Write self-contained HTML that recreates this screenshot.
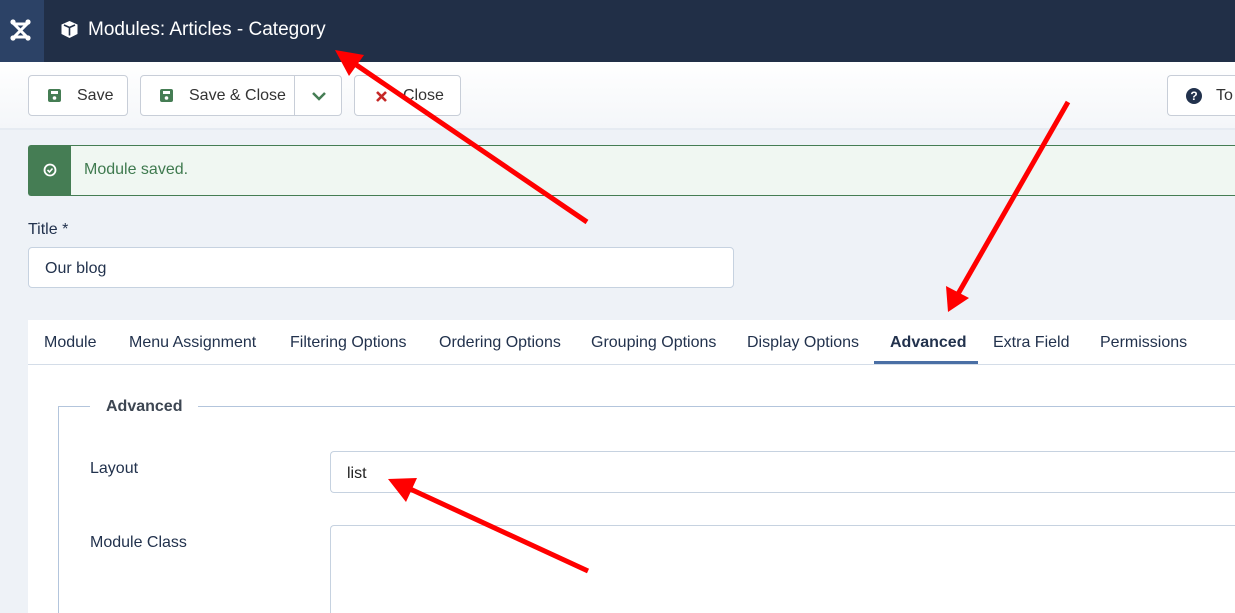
<!DOCTYPE html>
<html style="overflow:hidden;width:1235px;height:613px"><head><style>
*{box-sizing:border-box;margin:0;padding:0}
body{width:1235px;height:613px;overflow:hidden;background:#eef2f7;font-family:"Liberation Sans",sans-serif;color:#22324d;position:relative}
.hdr{position:absolute;left:0;top:0;width:1235px;height:62px;background:#212f47}
.logo{position:absolute;left:0;top:0;width:44px;height:62px;background:#2c4266}
.ttl{position:absolute;left:88px;top:19px;color:#fff;font-size:19px}
.tb{position:absolute;left:0;top:62px;width:1235px;height:68px;background:linear-gradient(#fff,#f4f6f9);border-bottom:2px solid #e6ebf2}
.btn{position:absolute;top:75px;height:41px;border:1px solid #c8ced8;border-radius:4px;background:#fff;font-size:16px;line-height:40px;color:#333;overflow:hidden}
.alert{position:absolute;left:28px;top:145px;width:1207px;height:51px;background:#f0f7f2;border:1px solid #457d54;border-right:none;border-radius:3px 0 0 3px}
.alert .g{position:absolute;left:0;top:0;width:42px;height:49px;background:#457d54}
.lbl{position:absolute;font-size:16px}
.inp{position:absolute;background:#fff;border:1px solid #c6d2e0;border-radius:4px;font-size:16px}
.panel{position:absolute;left:28px;top:320px;width:1207px;height:293px;background:#fff;overflow:hidden}
.tabs{position:absolute;left:0;top:0;width:100%;height:45px;border-bottom:1px solid #d4dde8}
.tab{position:absolute;top:14px;font-size:16px}
</style></head><body>
<div class="hdr"><div class="logo">
<svg width="44" height="62" viewBox="0 0 44 62"><g stroke="#fff" stroke-width="3" fill="none" stroke-linecap="round"><path d="M14 24 L27 37 M27 24 L14 37 M14 24 L27 24 M14 37 L27 37"/></g><g fill="#fff"><circle cx="13" cy="22" r="2.6"/><circle cx="28" cy="22" r="2.6"/><circle cx="13" cy="38" r="2.6"/><circle cx="28" cy="38" r="2.6"/></g></svg></div>
<svg style="position:absolute;left:60px;top:20px" width="19" height="19" viewBox="0 0 19 19"><path d="M9.5 1 L17.5 4.5 V14 L9.5 18 L1.5 14 V4.5Z" fill="#fff"/><path d="M4 5 L9.5 7.5 L15 5 M9.5 7.5 V15.5" stroke="#212f47" stroke-width="1.6" fill="none"/></svg>
<div class="ttl">Modules: Articles - Category</div></div>
<div class="tb"></div>
<div class="btn" style="left:28px;width:100px"><svg style="position:absolute;left:19px;top:13px" width="13" height="13"><rect width="13" height="13" rx="2" fill="#457d54"/><rect x="3" y="2" width="7" height="3" fill="#fff"/><circle cx="6.5" cy="9" r="1.8" fill="#fff"/></svg><span style="position:absolute;left:48px">Save</span></div>
<div class="btn" style="left:140px;width:202px"><svg style="position:absolute;left:19px;top:13px" width="13" height="13"><rect width="13" height="13" rx="2" fill="#457d54"/><rect x="3" y="2" width="7" height="3" fill="#fff"/><circle cx="6.5" cy="9" r="1.8" fill="#fff"/></svg><span style="position:absolute;left:48px">Save &amp; Close</span><span style="position:absolute;left:153px;top:0;height:39px;border-left:1px solid #c8ced8"></span><svg style="position:absolute;left:171px;top:15px" width="14" height="10"><path d="M1 2 L7 8 L13 2" stroke="#457d54" stroke-width="2.5" fill="none"/></svg></div>
<div class="btn" style="left:354px;width:107px"><svg style="position:absolute;left:20px;top:14px" width="13" height="13"><path d="M2 2L11 11M11 2L2 11" stroke="#c52827" stroke-width="2.6"/></svg><span style="position:absolute;left:48px">Close</span></div>
<div class="btn" style="left:1167px;width:68px;border-right:none;border-radius:4px 0 0 4px"><span style="position:absolute;left:18px;top:12px;width:16px;height:16px;border-radius:50%;background:#22324d;color:#fff;font-size:12px;line-height:16px;text-align:center;font-weight:bold">?</span><span style="position:absolute;left:48px">To</span></div>
<div class="alert"><div class="g"><svg style="position:absolute;left:14px;top:17px" width="14" height="14"><circle cx="7" cy="7" r="5.5" stroke="#fff" stroke-width="1.8" fill="none"/><path d="M4.5 7 L6.5 9 L9.5 5.5" stroke="#fff" stroke-width="1.6" fill="none"/></svg></div><span style="position:absolute;left:55px;top:15px;font-size:16px;color:#3f7a4f">Module saved.</span></div>
<div class="lbl" style="left:28px;top:221px">Title *</div>
<div class="inp" style="left:28px;top:247px;width:706px;height:41px;padding:12px 16px">Our blog</div>
<div class="panel"><div class="tabs">
<span class="tab" style="left:16px">Module</span><span class="tab" style="left:101px">Menu Assignment</span><span class="tab" style="left:262px">Filtering Options</span><span class="tab" style="left:411px">Ordering Options</span><span class="tab" style="left:563px">Grouping Options</span><span class="tab" style="left:719px">Display Options</span><span class="tab" style="left:862px;font-weight:bold">Advanced</span><span class="tab" style="left:965px">Extra Field</span><span class="tab" style="left:1072px">Permissions</span>
<div style="position:absolute;left:846px;top:41px;width:104px;height:3px;background:#4a6fa5"></div></div>
<div style="position:absolute;left:30px;top:86px;width:1177px;height:220px;border:1px solid #b3c5dc;border-right:none;border-bottom:none"></div>
<div style="position:absolute;left:62px;top:78px;background:#fff;padding:0 16px;font-weight:bold;font-size:16px;color:#3d4652">Advanced</div>
<div class="lbl" style="left:62px;top:140px">Layout</div>
<div class="inp" style="left:302px;top:131px;width:905px;height:42px;padding:13px 16px;color:#222;border-right:none;border-radius:4px 0 0 4px">list</div>
<div class="lbl" style="left:62px;top:214px">Module Class</div>
<div class="inp" style="left:302px;top:205px;width:905px;height:88px;border-right:none;border-bottom:none;border-radius:4px 0 0 0"></div>
</div>
<svg style="position:absolute;left:0;top:0" width="1235" height="613">
<g stroke="#f00" stroke-width="5" fill="#f00">
<line x1="587" y1="222" x2="352" y2="62"/><polygon points="335,50 364,55 349,76" stroke="none"/>
<line x1="1068" y1="102" x2="958" y2="294"/><polygon points="948,312 946,286 969,298" stroke="none"/>
<line x1="588" y1="571" x2="408" y2="488"/><polygon points="388,479 417,478 406,502" stroke="none"/>
</g></svg>
</body></html>
